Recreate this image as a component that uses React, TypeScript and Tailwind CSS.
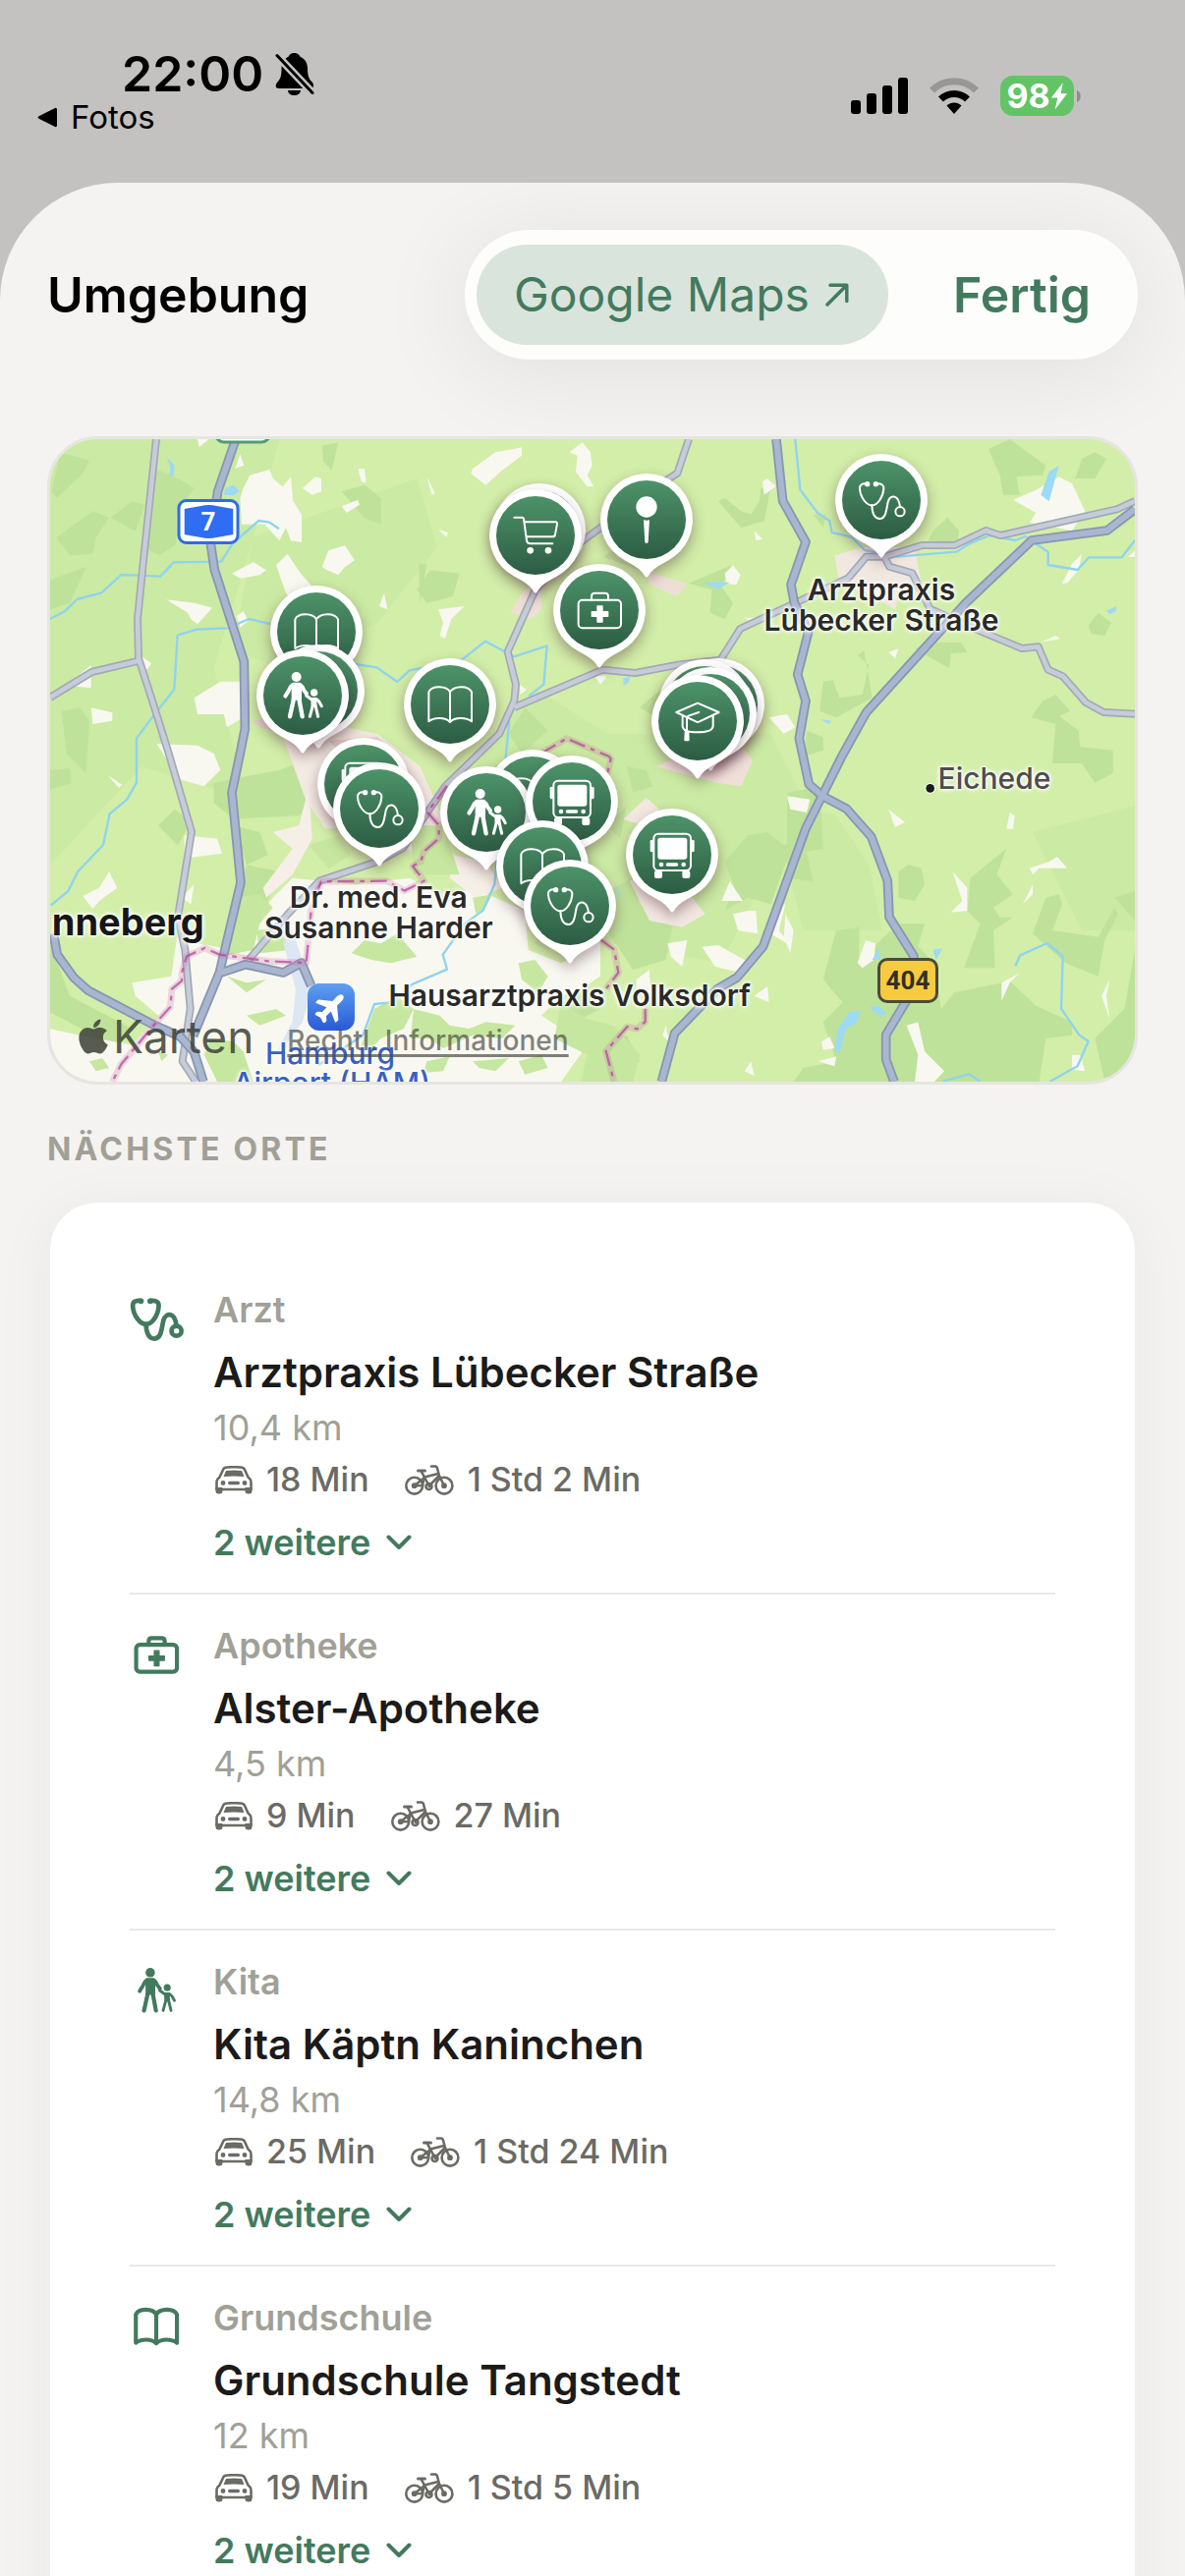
import React from 'react'
import { FaApple } from 'react-icons/fa'
import { IoAirplane } from 'react-icons/io5'

type GlyphName = 'arzt' | 'apotheke' | 'kita' | 'buch' | 'wagen' | 'ort' | 'bus' | 'schule'

type Place = {
    icon: GlyphName
    category: string
    name: string
    distance: string
    car: string
    bike: string
}

type Pin = { icon?: GlyphName, x: number, y: number, label: string }

const places: Place[] = [
    { icon: 'arzt', category: 'Arzt', name: 'Arztpraxis Lübecker Straße', distance: '10,4 km', car: '18 Min', bike: '1 Std 2 Min' },
    { icon: 'apotheke', category: 'Apotheke', name: 'Alster-Apotheke', distance: '4,5 km', car: '9 Min', bike: '27 Min' },
    { icon: 'kita', category: 'Kita', name: 'Kita Käptn Kaninchen', distance: '14,8 km', car: '25 Min', bike: '1 Std 24 Min' },
    { icon: 'buch', category: 'Grundschule', name: 'Grundschule Tangstedt', distance: '12 km', car: '19 Min', bike: '1 Std 5 Min' },
]

// map units, the map is 3312 x 1962
const MAP_W = 3312
const MAP_H = 1962

const pins: Pin[] = [
    { icon: 'buch', x: 813, y: 589, label: 'Grundschule' },
    { x: 819, y: 769, label: 'Kita' },
    { icon: 'kita', x: 771, y: 782, label: 'Kita' },
    { icon: 'buch', x: 1222, y: 809, label: 'Grundschule' },
    { x: 1495, y: 277, label: 'Supermarkt' },
    { icon: 'wagen', x: 1482, y: 294, label: 'Supermarkt' },
    { icon: 'ort', x: 1821, y: 246, label: 'Standort' },
    { icon: 'apotheke', x: 1677, y: 521, label: 'Apotheke' },
    { x: 2039, y: 809, label: 'Schule' },
    { x: 1999, y: 813, label: 'Schule' },
    { x: 2017, y: 837, label: 'Schule' },
    { icon: 'schule', x: 1977, y: 861, label: 'Schule' },
    { icon: 'arzt', x: 2538, y: 186, label: 'Arzt' },
    { icon: 'bus', x: 957, y: 1052, label: 'Bus' },
    { icon: 'arzt', x: 1005, y: 1128, label: 'Arzt' },
    { icon: 'buch', x: 1472, y: 1089, label: 'Grundschule' },
    { icon: 'kita', x: 1332, y: 1139, label: 'Kita' },
    { icon: 'bus', x: 1593, y: 1107, label: 'Bus' },
    { icon: 'buch', x: 1503, y: 1305, label: 'Grundschule' },
    { icon: 'arzt', x: 1587, y: 1425, label: 'Arzt' },
    { icon: 'bus', x: 1899, y: 1269, label: 'Bus' },
]

const at = (x: number, y: number) => ({ left: `${(x / MAP_W) * 100}%`, top: `${(y / MAP_H) * 100}%` })

export default function App() {
    return (
        <div className="h-screen overflow-hidden flex flex-col bg-[#c4c2c0] text-black font-['Inter','Liberation_Sans',sans-serif]">
            <StatusBar />
            <main className="flex-1 min-h-0 overflow-hidden rounded-t-[120px] bg-[#f4f3f1] px-12 pt-12">
                <header className="flex items-center justify-between">
                    <h1 className="text-[50px] leading-[60px] font-semibold">Umgebung</h1>
                    <div className="flex items-center rounded-full bg-[#fdfdfb] px-3 py-[15px] shadow-[0_12px_96px_8px_rgba(0,0,0,0.07)]">
                        <a href="#google-maps" className="flex items-center gap-4 rounded-full bg-[#d9e4dc] h-[102px] pl-[38px] pr-10 text-5xl text-[#437a5e]">
                            Google Maps
                            <svg viewBox="0 0 24 24" className="size-6" fill="none" stroke="currentColor" strokeWidth="3.4" strokeLinecap="round" strokeLinejoin="round">
                                <path d="M2 22 L21.500 2.500 M5 2.200 H21.800 V18.500" />
                            </svg>
                        </a>
                        <button type="button" className="h-[102px] pl-[66px] pr-9 text-[50px] font-semibold text-[#437a5e]">Fertig</button>
                    </div>
                </header>

                <AreaMap />

                <h2 className="mt-[46px] text-[32px] leading-[40px] font-bold tracking-widest text-[#a1a097]">NÄCHSTE ORTE</h2>

                <ul className="mt-[31px] rounded-[51px] border-[3px] border-[#efefed] bg-white bg-clip-padding px-[81px] pt-[57px] pb-14 shadow-[0_8px_60px_4px_rgba(0,0,0,0.04)]">
                    {places.map((p) => (
                        <PlaceRow key={p.name} place={p} />
                    ))}
                </ul>
            </main>
        </div>
    )
}

function StatusBar() {
    return (
        <div className="flex items-start justify-between shrink-0 h-[186px] pl-9 pr-[106px]">
            <div className="pt-[45px]">
                <div className="flex items-center gap-3 pl-[88px]">
                    <span className="text-[50px] leading-[60px] font-semibold">22:00</span>
                    <svg viewBox="0 0 40 44" className="w-10 h-11">
                        <path d="M19.500 1 C23.500 1 25 3.500 25.500 4.800 C31 7 33 12 33 17 C33 25 35 28 38 31 C40 34 39 37 36 37 H4 C0 37 0 34 2 31 C5 28 6.500 25 6.500 17 C6.500 12 8.500 7 13.500 4.800 C14 3.500 15.500 1 19.500 1 Z M13 39 H26 C26 42 23 44 19.500 44 C16 44 13 42 13 39 Z" />
                        <path d="M1.500 3 L38.500 42" stroke="#c4c2c0" strokeWidth="8" />
                        <path d="M2 3.500 L38 41.500" stroke="#000" strokeWidth="3" strokeLinecap="round" />
                    </svg>
                </div>
                <a href="#fotos" className="flex items-center gap-3 text-[33px] leading-[28px]">
                    <svg viewBox="0 0 24 24" className="size-6">
                        <path d="M4 11 L20 3 Q22 2 22 5 V20 Q22 23 20 22 L4 14 Q1 12.500 4 11 Z" />
                    </svg>
                    Fotos
                </a>
            </div>
            <div className="flex items-center gap-[22px] pt-[77px]">
                <svg viewBox="0 0 58 37" className="w-[58px] h-[37px]">
                    <rect x="0" y="23" width="10" height="14" rx="3" />
                    <rect x="16" y="16" width="10" height="21" rx="3" />
                    <rect x="32" y="8" width="10" height="29" rx="3" />
                    <rect x="48" y="0" width="10" height="37" rx="3" />
                </svg>
                <svg viewBox="0 0 50 37" className="w-[50px] h-[37px]" fill="none" strokeWidth="7">
                    <path d="M2.500 13 C15 0.500 35 0.500 47.500 13" stroke="#989795" />
                    <path d="M11.500 22 C19 14.500 31 14.500 38.500 22" stroke="#000" />
                    <path d="M17.500 28.500 C21.500 24.500 28.500 24.500 32.500 28.500 L25 37 Z" fill="#000" stroke="none" />
                </svg>
                <div className="flex items-center gap-[3px]">
                    <div className="flex items-center justify-center h-[41px] w-[75px] rounded-[13px] bg-[#62c466] text-white">
                        <span className="text-[34px] leading-[41px] font-bold">98</span>
                        <svg viewBox="0 0 16 26" className="w-[18px] h-7 shrink-0" fill="currentColor">
                            <path d="M11.500 0 L0.500 14.500 H6.500 L4 25.500 L15.500 10.500 H9.500 Z" />
                        </svg>
                    </div>
                    <svg viewBox="0 0 4 12" className="w-1 h-3" fill="#8f8e8d">
                        <path d="M0 0 C5 1 5 11 0 12 Z" />
                    </svg>
                </div>
            </div>
        </div>
    )
}

function PlaceRow({ place }: { place: Place }) {
    return (
        <li className="flex border-b-2 border-[#e9e9e7] last:border-b-0 pt-[30px] pb-[29px]">
            <div className="w-[85px] shrink-0 pt-1 text-[#437a5e]">
                <div className="flex size-[54px] items-center justify-center">
                    <Glyph name={place.icon} strokeWidth={13} className={place.icon === 'arzt' ? 'size-[52px]' : 'size-[46px]'} />
                </div>
            </div>
            <div className="flex-1 min-w-0">
                <div className="text-4xl leading-[44px] font-semibold text-[#a1a097]">{place.category}</div>
                <h3 className="mt-[15px] text-[42px] leading-[54px] font-semibold text-[#1b1b1a]">{place.name}</h3>
                <div className="mt-[7px] text-4xl leading-[44px] text-[#a1a097]">{place.distance}</div>
                <div className="mt-[9px] flex items-center text-[34px] leading-[44px] font-medium text-[#6b6a64]">
                    <CarIcon />
                    <span className="ml-[14px]">{place.car}</span>
                    <BikeIcon />
                    <span className="ml-[14px]">{place.bike}</span>
                </div>
                <button type="button" className="mt-5 flex items-center gap-4 text-4xl leading-[44px] font-semibold text-[#437a5e]">
                    2 weitere
                    <svg viewBox="0 0 26 16" className="w-[26px] h-4" fill="none" stroke="currentColor" strokeWidth="4" strokeLinecap="round" strokeLinejoin="round">
                        <path d="M2.500 2.500 L13 13 L23.500 2.500" />
                    </svg>
                </button>
            </div>
        </li>
    )
}

function CarIcon() {
    return (
        <svg viewBox="0 0 38 29" className="ml-0.5 w-[38px] h-[29px]" fill="none" stroke="currentColor" strokeWidth="2.600" strokeLinejoin="round">
            <path d="M4.500 11.500 L8 4 C8.500 2.200 10 1.600 12 1.500 Q19 1 26 1.500 C28 1.600 29.500 2.200 30 4 L33.500 11.500 C35.500 13 36.500 15 36.500 17 V24 H1.500 V17 C1.500 15 2.500 13 4.500 11.500 Z" />
            <path d="M11 5 Q19 4 27 5 L29.500 11 Q19 9.800 8.500 11 Z" fill="currentColor" stroke="none" />
            <circle cx="8" cy="17.500" r="2.400" fill="currentColor" stroke="none" />
            <circle cx="30" cy="17.500" r="2.400" fill="currentColor" stroke="none" />
            <rect x="13" y="15.800" width="12" height="3.400" rx="1.700" fill="currentColor" stroke="none" />
            <path d="M0.500 22 H7.500 V26 Q7.500 28.500 4 28.500 Q0.500 28.500 0.500 26 Z M30.500 22 H37.500 V26 Q37.500 28.500 34 28.500 Q30.500 28.500 30.500 26 Z" fill="currentColor" stroke="none" />
        </svg>
    )
}

function BikeIcon() {
    return (
        <svg viewBox="0 0 50 31" className="ml-9 w-[50px] h-[31px]" fill="none" stroke="currentColor" strokeWidth="2.600" strokeLinecap="round" strokeLinejoin="round">
            <circle cx="9.700" cy="21.200" r="8.400" />
            <circle cx="40" cy="21.200" r="8.400" />
            <path d="M13.500 6 H20.500" strokeWidth="3" />
            <path d="M17 7 L25 22 M9.700 21.200 L20 13 M9.700 21.200 L18 21 L19.500 12.500 M20 12.500 L34 9 M25 21 L34.500 11.500 M27 1.500 H31 Q32.500 1.500 33 3.500 L35 11 L40 21.200" />
            <circle cx="24.500" cy="22" r="3" />
            <circle cx="9.700" cy="21.200" r="1.600" fill="currentColor" />
            <circle cx="40" cy="21.200" r="1.600" fill="currentColor" />
        </svg>
    )
}

function Glyph({ name, strokeWidth, className }: { name: GlyphName, strokeWidth: number, className: string }) {
    return (
        <svg viewBox="-72 -72 144 144" className={`overflow-visible ${className}`} fill="none" stroke="currentColor" strokeWidth={strokeWidth} strokeLinecap="round" strokeLinejoin="round">
            {name === 'arzt' && (
                <>
                    <path d="M-44 -50 C-60 -52 -67 -46 -66 -34 C-64 -8 -46 16 -29 16 C-12 16 5 -8 7 -34 C8 -46 0 -52 -16 -50" />
                    <circle cx="-43" cy="-49" r="6" fill="currentColor" strokeWidth="4" />
                    <circle cx="-17" cy="-49" r="6" fill="currentColor" strokeWidth="4" />
                    <path d="M-29 16 C-28 42 -20 57 -5 57 C14 57 15 30 20 6 C24 -8 33 -12 41 -10 C52 -7 55 6 57 20" />
                    <circle cx="57" cy="35" r="14" />
                </>
            )}
            {name === 'apotheke' && (
                <>
                    <rect x="-64" y="-31" width="130" height="86" rx="12" />
                    <path d="M-24 -31 V-42 Q-24 -52 -14 -52 H17 Q27 -52 27 -42 V-31" />
                    <path d="M-6 -12 H9 V5 H26 V19 H9 V36 H-6 V19 H-23 V5 H-6 Z" fill="currentColor" strokeWidth="4" />
                </>
            )}
            {name === 'kita' && (
                <>
                    <g fill="currentColor" stroke="none">
                        <circle cx="-19" cy="-57" r="15" />
                        <path d="M-30 -40 H-8 L-3 -28 V14 H-34 V-28 Z" />
                        <circle cx="35" cy="-9" r="11" />
                        <path d="M25 6 H43 L44 36 H26 Z" />
                    </g>
                    <path d="M-30 -33 Q-38 -28 -42 -16 L-53 2 M-8 -33 Q0 -28 4 -16 L12 -6" strokeWidth="12" />
                    <path d="M-27 10 L-39 64 M-11 10 L-1 64" strokeWidth="13" />
                    <path d="M26 11 L11 0 M42 11 L50 18 L58 32 M30 34 L22 64 M40 34 L47 64" strokeWidth="9" />
                </>
            )}
            {name === 'buch' && (
                <path d="M0 -38 C-10 -58 -56 -59 -65 -38 V52 C-50 39 -14 38 0 54 C14 38 50 39 66 52 V-38 C56 -59 12 -58 0 -38 V54" />
            )}
            {name === 'wagen' && (
                <>
                    <path d="M-65 -55 H-41 Q-37 -55 -36 -51 L-27 15 Q-26 25 -16 25 H52 M-34 -41 H61 Q67 -41 66 -35 L60 -3 Q59 4 52 4 H-28" />
                    <circle cx="-16" cy="46" r="10" fill="currentColor" stroke="none" />
                    <circle cx="39" cy="46" r="10" fill="currentColor" stroke="none" />
                </>
            )}
            {name === 'ort' && (
                <g fill="currentColor" stroke="none">
                    <circle cx="0" cy="-39" r="32" />
                    <path d="M-9 1 Q0 3 9 1 L5 69 Q0 75 -5 69 Z" />
                </g>
            )}
            {name === 'schule' && (
                <>
                    <path d="M0 -55 L65 -27 L4 2 Q0 4 -4 2 L-65 -27 Z M-46 -16 V16 Q-44 34 0 34 Q44 34 47 16 V-16" />
                    <path d="M4 -27 L-28 -16 Q-33 -14 -33 -8 V32" />
                    <path d="M-37 32 H-29 L-28 58 H-38 Z" fill="currentColor" />
                </>
            )}
            {name === 'bus' && (
                <>
                    <rect x="-56" y="-64" width="113" height="112" rx="14" />
                    <g fill="currentColor" stroke="none">
                        <rect x="-44" y="-52" width="90" height="66" rx="8" />
                        <rect x="-67" y="-46" width="10" height="38" rx="5" />
                        <rect x="58" y="-46" width="10" height="38" rx="5" />
                        <circle cx="-33" cy="30" r="7" />
                        <circle cx="35" cy="30" r="7" />
                        <rect x="-19" y="25" width="38" height="10" rx="5" />
                        <rect x="-54" y="48" width="24" height="24" rx="6" />
                        <rect x="31" y="48" width="24" height="24" rx="6" />
                    </g>
                </>
            )}
        </svg>
    )
}

function MapPin({ pin }: { pin: Pin }) {
    return (
        <button type="button" aria-label={pin.label} style={at(pin.x, pin.y)} className="absolute -translate-x-1/2 -mt-[47px] w-[94px] h-[106px] text-white drop-shadow-[0_6px_7px_rgba(70,30,50,0.4)]">
            <svg viewBox="0 0 94 106" className="absolute inset-0 w-full h-full">
                <defs>
                    <linearGradient id="pinFill" x1="0" y1="0" x2="0" y2="1">
                        <stop offset="0" stopColor="#4d9369" />
                        <stop offset="1" stopColor="#2c5c43" />
                    </linearGradient>
                </defs>
                <path d="M47 0 A47 47 0 0 1 69 88.500 C59 94 53 97 49 104 Q47 107 45 104 C41 97 35 94 25 88.500 A47 47 0 0 1 47 0 Z" fill="#fff" />
                <circle cx="47" cy="47" r="40" fill="url(#pinFill)" />
            </svg>
            {pin.icon && <Glyph name={pin.icon} strokeWidth={6} className="absolute left-[23px] top-[23px] size-12" />}
        </button>
    )
}

function MapLabel({ x, y, className, children }: { x: number, y: number, className: string, children: React.ReactNode }) {
    return (
        <div style={at(x, y)} className={`absolute -translate-x-1/2 -translate-y-1/2 whitespace-nowrap text-center [text-shadow:0_0_3px_#fff,0_0_3px_#fff,0_0_4px_#fff,0_0_6px_#fff] ${className}`}>
            {children}
        </div>
    )
}

function AreaMap() {
    return (
        <div className="mt-[78px] rounded-[51px] border-[3px] border-[#e6e6e0] overflow-hidden bg-[#e6e6e0]">
            <div className="relative aspect-[1104/654] overflow-hidden rounded-[48px]">
                <Terrain />

                <div style={at(483, 252)} className="absolute -translate-x-1/2 -translate-y-1/2 flex w-[63px] h-[46px] items-center justify-center rounded-[9px] border-[3px] border-[#2f6be8] bg-white">
                    <svg viewBox="0 0 50 34" className="absolute w-[50px] h-[34px]" fill="#2f6df2">
                        <path d="M0 4 L17 1 Q25 -1 33 1 L50 4 V30 L33 33 Q25 35 17 33 L0 30 Z" />
                    </svg>
                    <span className="relative text-[26px] leading-7 font-bold text-white font-['Roboto',sans-serif]">7</span>
                </div>
                <div style={at(2619, 1652)} className="absolute -translate-x-1/2 -translate-y-1/2 flex w-[62px] h-[46px] items-center justify-center rounded-[10px] border-[3px] border-[#4b4a3c] bg-[#f6cb40] text-[26px] leading-7 font-bold text-[#33301f] font-['Roboto',sans-serif]">
                    404
                </div>

                <div style={at(858, 1733)} className="absolute -translate-x-1/2 -translate-y-1/2 flex size-12 items-center justify-center rounded-xl bg-linear-to-b from-[#5f9ff0] to-[#2b58d6] text-white">
                    <IoAirplane className="size-9 -rotate-45" />
                </div>
                <MapLabel x={855} y={1874} className="text-[30px] leading-[31px] font-medium text-[#3a5fc0]">Hamburg</MapLabel>
                <MapLabel x={860} y={1966} className="text-[30px] leading-[31px] font-medium text-[#3a5fc0]">Airport (HAM)</MapLabel>
                <MapLabel x={238} y={1474} className="text-[38px] leading-[44px] font-bold text-[#161616]">nneberg</MapLabel>
                <MapLabel x={2883} y={1034} className="text-[30px] leading-[31px] font-medium text-[#4f4d4b]">Eichede</MapLabel>

                {pins.map((p, i) => (
                    <MapPin key={i} pin={p} />
                ))}

                <MapLabel x={2538} y={507} className="text-[30px] leading-[31px] font-semibold text-[#2a2a28]">Arztpraxis<br />Lübecker Straße</MapLabel>
                <MapLabel x={1003} y={1445} className="text-[30px] leading-[31px] font-semibold text-[#2a2a28]">Dr. med. Eva<br />Susanne Harder</MapLabel>
                <MapLabel x={1586} y={1699} className="text-[30px] leading-[31px] font-semibold text-[#2a2a28]">Hausarztpraxis Volksdorf</MapLabel>

                <div style={at(84, 1823)} className="absolute -translate-y-1/2 flex items-center gap-1 text-[46px] leading-[48px] text-[#3c4036]/85">
                    <FaApple className="w-8 h-10" />
                    Karten
                </div>
                <a href="#recht" style={at(724, 1837)} className="absolute -translate-y-1/2 text-[28px] leading-8 font-medium underline decoration-[3px] underline-offset-4 text-[#4c4c46]/70">Rechtl. Informationen</a>
            </div>
        </div>
    )
}

const majorRoads = [
    'M567 0 L512 159 L490 319 L502 399 L547 539 L592 679 L595 884 L580 960 L555 1079 L582 1354 L517 1629 L437 1822',
    'M10 1510 L22 1574 L72 1644 L117 1684 L317 1789 L397 1824 L440 1872 L468 1962',
    'M522 1629 L597 1604 L712 1629 L767 1599 L797 1669',
    'M2217 0 L2237 189 L2307 314 L2262 444 L2272 499 L2315 589 L2282 719 L2307 799 L2287 914 L2317 1054 L2357 1089 L2432 1129 L2507 1214 L2557 1349 L2562 1459 L2637 1579 L2612 1719 L2552 1819 L2552 1894 L2577 1962',
    'M3312 214 L3227 279 L2997 309 L2797 499 L2492 834 L2417 969 L2357 1089 L2307 1189 L2177 1549 L2097 1644 L2037 1679 L1907 1814 L1867 1962',
]

const minorRoads = [
    'M324 0 L282 399 L267 549 L270 669 L312 799 L362 959 L432 1199 L390 1459 L412 1559 L428 1739 L404 1900 L445 1962',
    'M270 677 L127 711 L0 789',
    'M607 1589 L727 1449 L822 1349 L1002 1289 L1077 1249 L1207 1059 L1372 899 L1417 799 L1422 749 L1397 649 L1482 459 L1600 329 L1682 269 L1860 140 L1915 104 L1950 0',
    'M1417 819 L1687 704 L1787 714 L1917 689 L2047 674 L2107 579 L2257 509 L2437 424 L2492 359 L2547 359 L2662 324 L2762 324 L2857 279 L2902 294 L3257 214 L3312 189',
    'M2547 359 L2562 389 L2632 409 L2687 519 L2847 589 L2967 639 L3017 634 L3047 704 L3092 724 L3162 804 L3217 834 L3312 839',
]

const rivers = [
    'M0 549 L47 524 L82 489 L157 469 L217 414 L337 419 L377 376 L522 374 L557 319 L637 249 L670 254 L699 274',
    'M672 564 L607 549 L542 577 L447 581 L389 599 L379 764 L312 849 L264 914 L264 1049 L235 1100 L182 1144 L162 1239 L85 1320 L55 1380 L2 1424',
    'M932 687 L997 697 L1060 741 L1097 706 L1257 674 L1329 617 L1417 664 L1517 631 L1507 749 L1462 784',
    'M1402 860 L1392 960 L1362 1309 L1357 1359 L1322 1439 L1267 1479 L1199 1574 L1212 1619 L1107 1664 L1040 1720 L990 1725 L955 1820 L820 1910',
    'M2275 0 L2290 154 L2342 224 L2380 250 L2387 285 L2447 299 L2487 339 L2587 359 L2767 344 L2807 319 L2867 294 L2947 309 L2977 297 L3047 344 L3047 384 L3137 399 L3172 361 L3272 361 L3312 309',
    'M2947 1609 L2962 1576 L3044 1539 L3092 1579 L3087 1739 L3142 1819 L3170 1839 L3137 1914 L3052 1962',
    'M2727 1960 L2807 1939 L2840 1962',
]

const borders = [
    'M1500 959 L1577 914 L1707 969 L1712 977 L1697 1039',
    'M1212 1059 L1152 1139 L1187 1179 L1187 1219 L1142 1259 L1132 1289 L1107 1304 L1142 1349 L1082 1379 L1027 1349 L827 1351 L797 1439 L782 1599 L667 1594 L517 1574 L472 1554 L417 1579 L402 1629 L402 1654 L372 1679 L367 1734 L317 1789 L217 1909 L190 1962',
    'M1682 1529 L1722 1559 L1735 1629 L1697 1679',
    'M1817 1739 L1817 1779 L1792 1801 L1762 1794 L1697 1869 L1722 1962',
]

function Terrain() {
    return (
        <svg viewBox="0 0 3312 1962" preserveAspectRatio="xMidYMid slice" className="absolute inset-0 w-full h-full">
            <rect width="3312" height="1962" fill="#d2eea8" />

            {/* softer meadows */}
            <g fill="#cbeaa3">
                <path d="M0 0 H700 L620 300 L500 700 L600 1100 L280 1000 L0 1300 Z" />
                <path d="M620 300 L1120 120 L1180 330 L1000 560 L700 700 L560 640 Z" />
                <path d="M1290 960 L1480 760 L1700 900 L2200 900 L2300 1100 L2050 1600 L1500 1500 Z" />
                <path d="M3000 1200 L3312 1120 V1500 L3150 1500 Z M2200 1100 L2400 1150 L2500 1300 L2540 1500 L2300 1500 Z" />
            </g>

            {/* woods */}
            <g fill="#bfe29a">
                <path d="M30 40 L120 65 L95 110 L20 180 L5 160 Z" />
                <path d="M310 85 L400 125 L440 150 L385 230 L385 320 L335 355 L300 340 Z" />
                <path d="M20 300 L130 220 L180 240 L140 300 L130 350 L60 355 Z" />
                <path d="M185 240 L250 190 L290 200 L260 280 Z" />
                <path d="M0 430 L110 390 L60 500 L0 520 Z" />
                <path d="M830 20 L880 10 L860 95 L835 70 Z M890 160 L960 140 L1010 180 L1010 260 L960 240 Z" />
                <path d="M35 830 L90 820 L120 860 L110 1020 L50 960 Z M0 1010 L60 1005 L65 1050 L0 1070 Z" />
                <path d="M500 1050 L600 1030 L700 1010 L780 980 L830 1100 L760 1150 L560 1160 L500 1110 Z" />
                <path d="M330 1180 L380 1130 L430 1170 L390 1240 Z M560 1180 L640 1200 L665 1270 L600 1300 Z" />
                <path d="M1120 460 L1160 400 L1250 410 L1230 480 L1150 500 Z M1125 380 L1150 380 L1130 500 Z" />
                <path d="M2040 190 L2060 180 L2110 220 L2140 230 L2165 190 L2170 150 L2200 150 L2180 250 L2110 270 Z" />
                <path d="M1950 440 L2080 385 L2050 450 L2085 500 L2060 550 L2015 530 L2020 460 Z" />
                <path d="M1690 360 L1740 320 L1800 400 Z M1450 820 L1400 900 L1440 960 L1520 890 Z M1500 1000 L1420 980 L1300 1020 L1400 1100 Z" />
                <path d="M1800 820 L1870 760 L1900 800 L1850 850 Z M1760 1000 L1820 1010 L1840 1060 L1780 1080 Z" />
                <path d="M2865 30 L2930 0 L3040 80 L3030 110 L2950 115 L2960 170 L2910 170 L2900 110 Z" />
                <path d="M3130 120 L3150 60 L3190 40 L3225 60 L3190 120 Z" />
                <path d="M2700 275 L2740 240 L2775 280 L2770 320 L2680 310 Z M2330 230 L2370 230 L2360 270 Z" />
                <path d="M2360 740 L2390 735 L2410 790 L2480 780 L2500 690 L2465 660 L2485 645 L2510 790 L2400 850 L2350 830 Z" />
                <path d="M2680 620 L2780 620 L2800 650 L2750 655 L2745 700 L2640 640 Z" />
                <path d="M2995 850 L3030 800 L3070 780 L3115 830 L3080 845 L3140 890 L3145 940 L3245 950 L3245 1020 L3190 1050 L3150 990 L3060 990 L3070 870 Z" />
                <path d="M3170 570 L3200 530 L3240 560 L3220 600 L3180 595 Z M2310 890 L2360 910 L2360 950 L2300 970 Z" />
                <path d="M2250 1080 L2350 1060 L2360 1250 L2310 1260 L2330 1350 L2250 1340 Z" />
                <path d="M2590 1320 L2620 1300 L2660 1310 L2670 1360 L2640 1410 L2590 1400 Z" />
                <path d="M2810 1340 L2920 1250 L2890 1330 L2940 1390 L2880 1430 L2900 1460 L2940 1460 L2880 1500 L2885 1615 L2790 1615 L2840 1480 L2800 1440 Z" />
                <path d="M2400 1500 L2470 1490 L2470 1590 L2590 1480 L2670 1480 L2650 1550 L2700 1600 L2720 1740 L2760 1690 L2930 1655 L3010 1730 L3120 1780 L3120 1820 L3040 1830 L3020 1962 L2270 1962 L2300 1920 L2400 1900 L2360 1780 L2420 1720 L2360 1650 Z" />
                <path d="M3000 1510 L3040 1400 L3080 1390 L3090 1420 L3060 1500 L3200 1520 L3250 1430 L3260 1450 L3220 1530 L3200 1640 L3100 1600 Z" />
                <path d="M3312 1560 V1962 H3220 L3190 1830 L3280 1740 Z M3250 1400 L3312 1380 V1470 Z" />
                <path d="M2060 1290 L2130 1210 L2190 1200 L2240 1240 L2270 1230 L2200 1420 L2130 1400 L2060 1440 L2090 1370 Z" />
                <path d="M1700 1380 L1780 1340 L1800 1420 L1900 1490 L1880 1590 L1780 1620 L1700 1500 Z M1760 1120 L1700 1180 L1740 1220 Z" />
                <path d="M0 1540 L60 1700 L250 1800 L190 1850 L0 1750 Z M600 1300 L700 1320 L640 1470 L560 1480 Z" />
                <path d="M1650 1860 L1760 1820 L1800 1900 L1700 1962 L1640 1940 Z M1560 1660 L1620 1640 L1680 1740 L1600 1780 Z" />
            </g>

            {/* built-up land */}
            <g fill="#f8f8f0">
                <path d="M580 45 L592 80 L565 90 Z M450 0 L485 0 L455 25 Z" />
                <path d="M590 150 L610 110 L670 92 L680 120 L710 145 L735 115 L742 190 L768 230 L768 315 L735 310 L720 270 L700 310 L655 260 L585 260 L580 180 Z" />
                <path d="M770 150 L810 115 L828 120 L828 160 L800 170 Z M940 90 L960 90 L965 135 L950 130 Z M890 205 L940 185 L945 200 L905 225 Z" />
                <path d="M830 390 L850 340 L900 325 L930 370 L900 390 L880 415 L845 400 Z" />
                <path d="M555 410 L620 375 L660 400 L640 415 L580 425 Z M690 385 L725 350 L765 410 L800 450 L740 500 L720 470 Z" />
                <path d="M355 490 L440 500 L495 515 L450 565 L430 550 L420 530 Z M570 540 L590 525 L605 555 L580 575 Z M1020 470 L1030 520 L1005 510 Z" />
                <path d="M75 730 L125 690 L125 760 L80 755 Z M125 820 L190 835 L190 860 L130 870 Z M275 660 L310 685 L290 710 Z" />
                <path d="M440 790 L520 740 L580 740 L590 850 L540 880 L530 840 L450 840 Z" />
                <path d="M325 930 L450 935 L500 960 L520 1010 L470 1060 L400 1040 L370 1000 Z" />
                <path d="M1150 115 L1175 165 L1165 170 Z M1290 90 L1360 40 L1440 25 L1440 50 L1380 95 L1330 140 L1285 105 Z M1585 40 L1625 10 L1650 40 L1655 80 L1640 110 L1660 145 L1640 145 L1605 100 L1610 50 Z" />
                <path d="M1185 275 L1215 285 L1210 300 Z M1185 520 L1265 510 L1225 550 L1205 610 L1190 600 L1200 560 Z" />
                <path d="M2175 130 L2190 120 L2215 145 L2180 170 Z M2060 410 L2085 385 L2108 415 L2095 445 L2065 440 Z M2150 280 L2175 305 L2155 310 Z" />
                <path d="M2195 850 L2250 840 L2275 880 L2240 900 Z M2120 545 L2160 545 L2150 565 Z" />
                <path d="M1440 470 L1500 420 L1500 520 L1470 550 L1405 530 Z" fill="#eedfd6" />
                <path d="M1825 405 L1945 440 L1915 480 L1830 445 Z" fill="#eedfd6" />
                <path d="M1435 750 L1455 765 L1435 780 Z M1660 720 L1700 725 L1680 750 Z" />
                <path d="M2395 355 L2480 330 L2640 330 L2660 440 L2600 440 L2580 520 L2460 450 L2410 440 Z" fill="#f1e8df" />
                <path d="M2940 185 L3010 155 L3080 115 L3120 135 L3160 220 L3120 280 L3050 265 L2990 255 L3010 225 Z" />
                <path d="M3090 440 L3120 380 L3150 350 L3140 400 L3105 440 Z M3290 360 L3312 340 V360 Z" />
                <path d="M2560 650 L2590 640 L2580 670 Z M3025 620 L3070 600 L3085 610 Z" />
                <path d="M700 880 L780 1100 L840 1190 L960 1180 L1100 1260 L1200 1160 L1130 1000 L1000 900 L900 880 Z" fill="#f3ebe2" />
                <path d="M850 920 L1000 910 L1050 960 L930 1000 Z M620 860 L690 850 L720 900 L640 880 Z" fill="#e8d2cb" />
                <path d="M1850 1000 L2080 900 L2145 980 L2110 1060 L2040 1050 Z" fill="#f0dfd9" />
                <path d="M1750 1160 L1820 1095 L1860 1130 L1810 1180 Z M1770 1350 L1800 1330 L1960 1400 L2000 1450 L1930 1490 L1830 1470 Z" fill="#f3e8e1" />
                <path d="M2250 1090 L2320 1100 L2310 1140 L2260 1130 Z M2245 1450 L2270 1500 L2260 1570 L2240 1520 Z" />
                <path d="M2050 1410 L2075 1350 L2115 1410 Z M2085 1450 L2130 1440 L2155 1440 L2160 1510 L2100 1500 Z M2200 1440 L2245 1420 L2225 1500 L2265 1550 L2200 1510 Z" />
                <path d="M1885 1540 L1945 1530 L1930 1610 L1895 1580 Z M1990 1550 L2040 1545 L2120 1590 L2150 1590 L2110 1630 L2030 1610 Z" />
                <path d="M2560 1130 L2610 1170 L2580 1185 Z M2930 1140 L2945 1150 L2940 1190 L2920 1190 Z M2755 1320 L2800 1370 L2800 1440 L2750 1445 L2785 1410 Z" />
                <path d="M2990 1310 L3050 1290 L3075 1275 L3105 1310 L3020 1310 L3000 1330 Z M2970 1420 L3000 1360 L3000 1390 Z" />
                <path d="M2465 1600 L2490 1530 L2520 1540 L2515 1590 L2480 1615 Z M2615 1790 L2650 1780 L2670 1870 L2730 1930 L2700 1962 L2640 1962 L2650 1880 Z" />
                <path d="M2905 1660 L2960 1630 L2930 1660 L2905 1715 Z M3210 1700 L3235 1650 L3225 1700 L3235 1770 Z M3120 1880 L3145 1880 L3160 1930 L3120 1925 Z M2355 1840 L2380 1825 L2395 1860 L2360 1865 Z M2345 1900 L2400 1885 L2395 1915 Z" />
                <path d="M100 1395 L150 1370 L180 1320 L205 1370 L150 1410 L130 1435 Z M400 1400 L440 1360 L430 1420 Z M410 1210 L510 1220 L525 1265 L410 1280 Z M175 1025 L220 1055 L210 1065 Z" />
                <path d="M390 1500 L450 1540 L560 1560 L680 1400 L740 1340 L930 1360 L1100 1340 L1200 1400 L1290 1370 L1450 1440 L1460 1560 L1560 1600 L1650 1560 L1640 1680 L1560 1700 L1500 1760 L1640 1850 L1560 1962 H0 V1800 L90 1820 L250 1850 L330 1760 L260 1700 L250 1660 L370 1640 Z" />
                <path d="M1600 1540 L1680 1530 L1680 1640 L1620 1680 Z M1790 1650 L1830 1620 L1835 1700 L1790 1690 Z M1870 1820 L1880 1790 L1890 1840 Z M2150 1700 L2190 1670 L2195 1720 Z M2120 1930 L2140 1900 L2150 1945 Z" />
                <path d="M680 1200 L760 1180 L790 1060 L800 1220 L740 1330 L660 1400 L650 1370 L740 1250 Z M1230 1270 L1330 1290 L1380 1370 L1300 1400 L1220 1340 Z" fill="#f6efe7" />
            </g>

            {/* parks inside the city */}
            <g fill="#c6e79f">
                <path d="M540 1640 L600 1660 L660 1650 L600 1690 Z M490 1830 L560 1840 L590 1870 L620 1962 L510 1962 L470 1880 Z" />
                <path d="M920 1570 L960 1530 L1010 1540 L1060 1510 L1120 1580 L1040 1600 L980 1590 Z M990 1740 L1060 1700 L1110 1740 L1080 1800 L1010 1830 L980 1860 L950 1850 Z" />
                <path d="M1110 1740 L1190 1760 L1220 1790 L1280 1800 L1330 1780 L1420 1790 L1380 1830 L1290 1820 L1200 1860 L1160 1830 L1100 1830 Z" />
                <path d="M560 1400 L640 1390 L680 1430 L640 1480 L620 1560 L520 1580 Z M330 1870 L360 1880 L340 1900 Z M1290 1900 L1400 1890 L1360 1930 L1310 1920 Z" />
                <path d="M1430 1600 L1480 1590 L1520 1640 L1490 1690 L1440 1650 Z M1560 1720 L1640 1770 L1720 1790 L1800 1880 L1780 1962 L1620 1962 L1640 1880 L1540 1830 Z" />
                <path d="M790 1240 L880 1210 L920 1270 L850 1310 Z M1100 1180 L1200 1180 L1250 1330 L1110 1330 Z M630 1500 L700 1490 L730 1560 L640 1570 Z" />
                <path d="M1290 1400 L1350 1390 L1330 1430 L1300 1450 Z M1500 1480 L1540 1520 L1520 1560 L1480 1540 Z M600 1760 L690 1740 L720 1760 L640 1790 Z M120 1900 L160 1890 L180 1920 L140 1930 Z M1150 1900 L1220 1885 L1200 1930 L1140 1935 Z M1430 1900 L1500 1880 L1520 1920 L1450 1940 Z" />
            </g>

            <g fill="#9ddaf3">
                <path d="M357 55 L380 80 L378 110 L362 115 L368 90 Z M535 150 L560 140 L578 158 L560 172 L530 170 Z" />
                <path d="M1990 437 L2075 437 L2040 458 Z M1750 730 L1772 725 L1765 745 L1750 752 Z M3050 100 L3080 80 L3050 190 L3025 170 Z M3225 525 L3255 510 L3255 525 L3235 535 Z" />
                <path d="M2395 1870 L2405 1800 L2440 1750 L2475 1745 L2460 1785 L2430 1800 L2410 1875 Z M2500 1735 L2530 1730 L2555 1755 L2530 1760 Z M2510 1590 L2530 1555 L2535 1590 Z M2695 1560 L2725 1555 L2705 1590 Z M1725 1370 L1735 1375 L1745 1405 Z M2350 855 L2385 860 L2380 870 Z" />
            </g>
            <g fill="#dce6f4">
                <path d="M710 1530 L770 1590 L800 1680 L770 1780 L720 1850 L680 1890 L740 1780 L750 1680 Z M700 1480 L740 1500 L770 1590 L730 1570 Z" />
            </g>

            <g fill="none" stroke="#8fd3f0" strokeWidth="7" strokeLinejoin="round">
                {rivers.map((d) => <path key={d} d={d} />)}
            </g>
            <g fill="none" strokeLinejoin="round">
                {minorRoads.map((d) => <path key={d} d={d} stroke="#a3a9b7" strokeWidth="24" />)}
                {minorRoads.map((d) => <path key={d + 'f'} d={d} stroke="#c6ccd8" strokeWidth="14" />)}
                {majorRoads.map((d) => <path key={d} d={d} stroke="#8a96b2" strokeWidth="29" />)}
                {majorRoads.map((d) => <path key={d + 'f'} d={d} stroke="#a9b6d0" strokeWidth="18" />)}
                {borders.map((d) => <path key={d} d={d} stroke="#c76fa8" strokeOpacity="0.25" strokeWidth="20" />)}
                {borders.map((d) => <path key={d + 'f'} d={d} stroke="#b23f9b" strokeOpacity="0.7" strokeWidth="7" strokeDasharray="50 18 14 18" />)}
            </g>

            <rect x="504" y="-100" width="168" height="109" rx="28" fill="#fff" stroke="#4f9a78" strokeWidth="9" />
            <circle cx="2687" cy="1066" r="16" fill="#fff" />
            <circle cx="2687" cy="1066" r="13" fill="#1a1a1a" />
        </svg>
    )
}
